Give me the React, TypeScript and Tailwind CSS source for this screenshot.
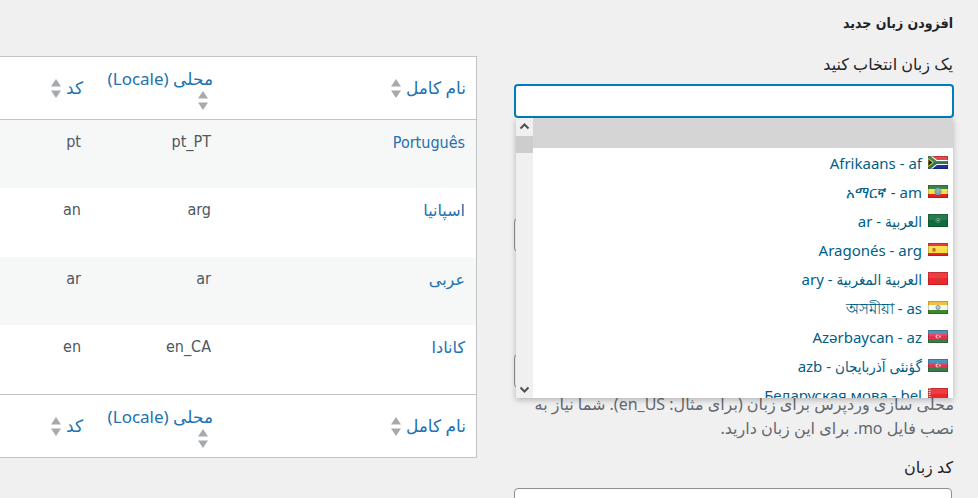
import type { ReactNode } from "react";

type Row = { name: string; locale: string; code: string; latin?: boolean };
type Language = { label: string; code: string; flag: ReactNode };

const ROWS: Row[] = [
  { name: "Português", locale: "pt_PT", code: "pt", latin: true },
  { name: "اسپانیا", locale: "arg", code: "an" },
  { name: "عربی", locale: "ar", code: "ar" },
  { name: "کانادا", locale: "en_CA", code: "en" },
];

const LATIN_FONT = "font-['DejaVu_Sans_Condensed','Noto_Sans',sans-serif]";

const azerbaijan = (
  <>
    <rect width="20" height="5" fill="#3f86b4" />
    <rect y="4" width="20" height="5" fill="#e0324b" />
    <rect y="9" width="20" height="5" fill="#3a7b48" />
    <circle cx="9.5" cy="6.5" r="2" fill="#f6c4cc" />
    <circle cx="10.2" cy="6.5" r="1.2" fill="#e0324b" />
    <circle cx="12" cy="6.5" r="1" fill="#f6c4cc" />
  </>
);

const LANGUAGES: Language[] = [
  {
    label: "Afrikaans",
    code: "af",
    flag: (
      <>
        <rect width="20" height="7" fill="#e8303a" />
        <rect y="7" width="20" height="7" fill="#1f2f9c" />
        <path d="M0 0L8 6.5H20M0 13L8 6.5" stroke="#fff" strokeWidth="5" fill="none" />
        <path d="M0 0L8 6.5H20M0 13L8 6.5" stroke="#2c7a4b" strokeWidth="3" fill="none" />
        <path d="M0 2.5L5 6.5L0 10.5Z" fill="#1c1c1c" stroke="#d8c33c" />
      </>
    ),
  },
  {
    label: "አማርኛ",
    code: "am",
    flag: (
      <>
        <rect width="20" height="5" fill="#26752f" />
        <rect y="4" width="20" height="5" fill="#f7e13c" />
        <rect y="9" width="20" height="5" fill="#e2231f" />
        <circle cx="10" cy="6.5" r="3.6" fill="#6fa5b0" />
        <circle cx="10" cy="6.5" r="1.5" fill="#8fb09c" />
      </>
    ),
  },
  {
    label: "العربية",
    code: "ar",
    flag: (
      <>
        <rect width="20" height="13" fill="#0d6b3c" />
        <circle cx="10" cy="6.5" r="2.2" fill="none" stroke="#4f9270" />
        <rect x="9" y="6" width="2" height="1" fill="#9cc5ae" />
      </>
    ),
  },
  {
    label: "Aragonés",
    code: "arg",
    flag: (
      <>
        <rect width="20" height="13" fill="#e3262b" />
        <rect y="3" width="20" height="7" fill="#fbdf3b" />
        <rect x="4" y="5" width="4" height="4" fill="#e3a055" />
        <rect x="5" y="5" width="2" height="3" fill="#c8543a" />
      </>
    ),
  },
  {
    label: "العربية المغربية",
    code: "ary",
    flag: (
      <>
        <rect width="20" height="13" fill="#f0262c" />
        <path d="M10 4L11.5 9L7.7 6H12.3L8.5 9Z" fill="none" stroke="#a8502f" strokeWidth="0.7" />
      </>
    ),
  },
  {
    label: "অসমীয়া",
    code: "as",
    flag: (
      <>
        <rect width="20" height="5" fill="#eebb2b" />
        <rect y="4" width="20" height="5" fill="#f7f7f7" />
        <rect y="9" width="20" height="5" fill="#3a8a2a" />
        <circle cx="10" cy="6.5" r="2" fill="#b9c9e6" stroke="#6a8ac0" />
      </>
    ),
  },
  { label: "Azərbaycan", code: "az", flag: azerbaijan },
  { label: "گؤنئی آذربایجان", code: "azb", flag: azerbaijan },
  {
    label: "Беларуская мова",
    code: "bel",
    flag: (
      <>
        <rect width="20" height="9" fill="#ee262b" />
        <rect y="9" width="20" height="4" fill="#6f6a2c" />
        <path d="M1.5 0V13" stroke="#f7d4d4" strokeWidth="2" strokeDasharray="1 1" />
      </>
    ),
  },
];

function Flag({ children }: { children: ReactNode }) {
  return (
    <svg width="20" height="13" viewBox="0 0 20 13" className="shrink-0 overflow-hidden" aria-hidden="true">
      {children}
      <rect width="20" height="6" fill="#fff" opacity="0.1" />
      <rect x="0.5" y="0.5" width="19" height="12" fill="none" stroke="#000" strokeOpacity="0.2" />
    </svg>
  );
}

function SortHeader({ children }: { children: ReactNode }) {
  return (
    <th scope="col" className="px-[10px] py-2 text-start align-middle text-[17px] font-normal">
      <a href="#" className="flex flex-wrap items-center text-[#2271b1]">
        <span className="whitespace-nowrap">{children}</span>
        <svg width="10" height="19" viewBox="0 0 10 19" fill="#a7aaad" className="ms-[5px]" aria-hidden="true">
          <path d="M5 0L10 7.5H0Z" />
          <path d="M5 19L10 11.5H0Z" />
        </svg>
      </a>
    </th>
  );
}

function HeaderRow() {
  return (
    <tr className="h-[63px]">
      <SortHeader>نام کامل</SortHeader>
      <SortHeader>محلی (Locale)</SortHeader>
      <SortHeader>کد</SortHeader>
    </tr>
  );
}

function LanguageTable() {
  return (
    <table className="w-full table-fixed border-separate border-spacing-0 border-y border-r border-[#c3c4c7] bg-white leading-6">
      <colgroup>
        <col className="w-[253px]" />
        <col className="w-[130px]" />
        <col />
      </colgroup>
      <thead className="[&_th]:border-b [&_th]:border-[#c3c4c7]">
        <HeaderRow />
      </thead>
      <tbody>
        {ROWS.map((row) => (
          <tr key={row.locale} className="h-[68px] align-top text-[#50575e] odd:bg-[#f6f7f7] even:h-[69px]">
            <td className="px-[11px] py-[10px]">
              <a href="#" className={`text-[#2271b1] ${row.latin ? LATIN_FONT : ""}`}>
                {row.name}
              </a>
            </td>
            <td className={`px-3 py-[10px] ${LATIN_FONT}`}>{row.locale}</td>
            <td className={`px-3 py-[10px] ${LATIN_FONT}`}>{row.code}</td>
          </tr>
        ))}
      </tbody>
      <tfoot className="[&_th]:border-t [&_th]:border-[#c3c4c7]">
        <HeaderRow />
      </tfoot>
    </table>
  );
}

function Chevron({ d }: { d: string }) {
  return (
    <svg width="17" height="17" viewBox="0 0 17 17" fill="none" stroke="#505050" strokeWidth="2" aria-hidden="true">
      <path d={d} />
    </svg>
  );
}

function LanguageMenu() {
  return (
    <div className="absolute top-full right-px left-[2px] flex h-[280px] flex-row-reverse overflow-hidden bg-white shadow-[0_2px_6px_rgba(0,0,0,0.25)]">
      {/* Scrollbar */}
      <div className="flex w-[17px] shrink-0 flex-col bg-[#f0f0f0]">
        <Chevron d="M4.5 10.5L8.5 6.5L12.5 10.5" />
        <div className="mt-px h-[17px] bg-[#cdcdcd]" />
        <div className="mt-auto">
          <Chevron d="M4.5 6.5L8.5 10.5L12.5 6.5" />
        </div>
      </div>

      <ul className="min-w-0 flex-1 text-[15px] leading-5 text-[#016087] font-['Noto_Sans','DejaVu_Sans_Condensed','DejaVu_Sans',sans-serif]">
        <li className="h-[30px] bg-[#d5d5d5]" />
        {LANGUAGES.map((lang) => (
          <li key={lang.code}>
            <button type="button" className="flex h-[29px] w-full items-center gap-[6px] px-[5px]">
              <Flag>{lang.flag}</Flag>
              <span className="whitespace-nowrap">
                {lang.label} - {lang.code}
              </span>
            </button>
          </li>
        ))}
      </ul>
    </div>
  );
}

const INPUT =
  "block h-[34px] w-[calc(100%-2px)] ms-[2px] rounded border border-[#8c8f94] bg-white px-2";

function AddLanguageForm() {
  return (
    <form className="w-[440px] shrink-0 text-[#1d2327]">
      <h2 className="px-px pt-[11px] text-sm leading-6 font-bold font-['DejaVu_Sans_Condensed','DejaVu_Sans',sans-serif]">
        افزودن زبان جدید
      </h2>
      <label htmlFor="lang_list" className="mt-[17px] block px-px leading-6">
        یک زبان انتخاب کنید
      </label>
      <div className="relative z-10 mt-2">
        <select
          id="lang_list"
          className="block h-[34px] w-full appearance-none rounded border-2 border-[#007cba] bg-white px-2"
        >
          <option value="" />
          {LANGUAGES.map((lang) => (
            <option key={lang.code} value={lang.code}>
              {lang.label}
            </option>
          ))}
        </select>
        <LanguageMenu />
      </div>

      <div className="mt-[100px] space-y-[102px]">
        <input type="text" aria-label="نام کامل" className={INPUT} />
        <input type="text" aria-label="محلی" className={INPUT} />
      </div>
      <p className="mt-1 leading-6 text-[#646970]">
        محلی سازی وردپرس برای زبان (برای مثال: <bdi>en_US</bdi>). شما نیاز به نصب فایل mo. برای این زبان دارید.
      </p>
      <label htmlFor="lang_code" className="mt-[15px] mb-[9px] block px-px leading-6">
        کد زبان
      </label>
      <input id="lang_code" type="text" className={INPUT} />
    </form>
  );
}

export default function App() {
  return (
    <div
      dir="rtl"
      className="flex h-screen items-start gap-[37px] overflow-hidden bg-[#f0f0f1] pr-6 text-base font-['Noto_Sans','DejaVu_Sans',sans-serif]"
    >
      <AddLanguageForm />
      <div className="min-w-0 flex-1 pt-14">
        <LanguageTable />
      </div>
    </div>
  );
}
